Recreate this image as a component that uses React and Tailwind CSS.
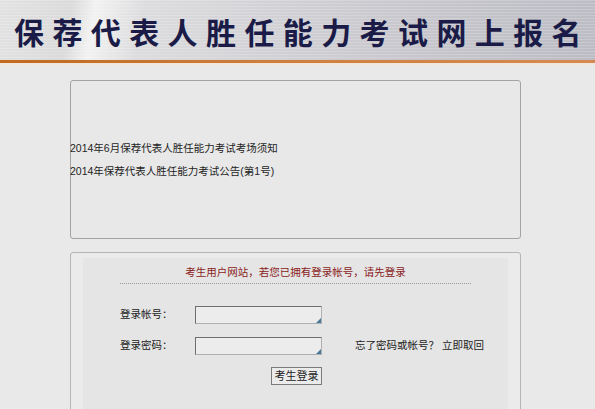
import React from "react";

const cjk = { fontFamily: '"Liberation Sans", "Noto Sans CJK SC", sans-serif' };

function Field() {
  return (
    <div className="relative w-[127px] h-[18px] border border-t-[#6f6f6f] border-l-[#6f6f6f] border-r-[#b0b0b0] border-b-[#b0b0b0] bg-[#ececec]">
      <div className="absolute right-0 bottom-0 w-0 h-0 border-l-[5px] border-l-transparent border-b-[5px] border-b-[#4a7a9a]" />
    </div>
  );
}

export default function App() {
  return (
    <div className="w-[595px] h-[409px] overflow-hidden bg-[#e9e9e9]" style={cjk}>
      {/* Header */}
      <div className="h-[60px] flex items-center pl-[14px] pt-[1px] bg-[image:repeating-linear-gradient(180deg,rgba(255,255,255,0.18)_0px,rgba(255,255,255,0.18)_1px,transparent_1px,transparent_3px),linear-gradient(100deg,#e2e2e2_0%,#dadada_12%,#f2f2f2_16%,#dcdcde_24%,#d2d2d6_45%,#c6c6cc_70%,#bcbcc4_100%)]">
        <div
          className="text-[30px] font-bold text-[#1b1b48] tracking-[8.4px] leading-none whitespace-nowrap"
          style={{ fontFamily: '"Noto Sans CJK SC", sans-serif' }}
        >
          保荐代表人胜任能力考试网上报名
        </div>
      </div>
      <div className="h-[3px] bg-[linear-gradient(90deg,#c06a22,#cf8040_50%,#d68a52)]" />
      <div className="h-[2px] bg-[#f1e6dc]" />

      {/* Notice box */}
      <div className="ml-[70px] mt-[15px] w-[451px] h-[159px] border border-[#a3a3a3] rounded-[3px] bg-[#e8e8e8] pt-[56px]">
        <div className="text-[10.5px] text-[#1e1e1e] leading-[23px] -ml-[1px]">
          <div>2014年6月保荐代表人胜任能力考试考场须知</div>
          <div>2014年保荐代表人胜任能力考试公告(第1号)</div>
        </div>
      </div>

      {/* Login box */}
      <div className="ml-[70px] mt-[13px] w-[451px] h-[170px] border border-[#b5b5b5] rounded-[3px] bg-[#ebebeb] pt-[5px]">
        <div className="mx-[12px] h-[160px] bg-[#e5e5e5] pt-[7px]">
          <div className="mx-[37px] border-b border-dotted border-[#9a9a9a] text-center text-[10.5px] text-[#8a1c1c] leading-[14px] pb-[4px]">
            考生用户网站，若您已拥有登录帐号，请先登录
          </div>
          <div className="pl-[37px] pt-[22px] text-[10.5px] text-[#222]">
            <div className="flex items-center h-[18px]">
              <div className="w-[75px]">登录帐号：</div>
              <Field />
            </div>
            <div className="flex items-center h-[18px] mt-[13px]">
              <div className="w-[75px]">登录密码：</div>
              <Field />
              <div className="ml-[33px]">忘了密码或帐号？ 立即取回</div>
            </div>
            <div className="flex mt-[12px] pl-[75px] w-[202px] justify-end">
              <div className="w-[51px] h-[18px] border border-[#7c7c7c] bg-[#ebebeb] flex items-center justify-center text-[11px] text-[#222] leading-none">
                考生登录
              </div>
            </div>
          </div>
        </div>
      </div>
    </div>
  );
}
